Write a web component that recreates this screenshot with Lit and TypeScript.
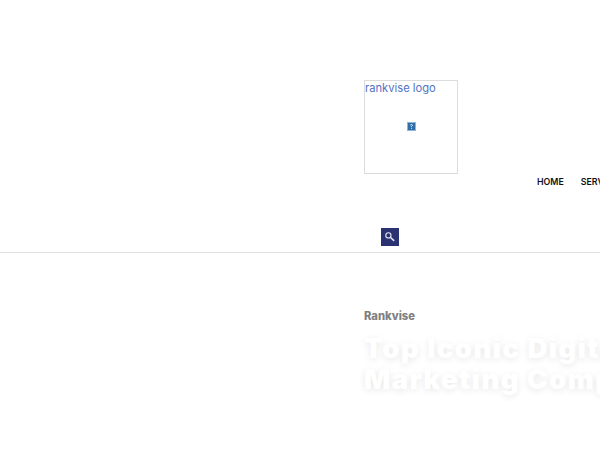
import { LitElement, html, css } from "lit";
import { customElement } from "lit/decorators.js";

@customElement("app-root")
export class AppRoot extends LitElement {
  static styles = css`
    :host {
      display: block;
      width: 600px;
      height: 450px;
      overflow: hidden;
      background: #fff;
      font-family: Inter, "Liberation Sans", sans-serif;
    }
    .header {
      height: 252px;
      border-bottom: 1px solid #e2e2e2;
      display: flex;
      flex-direction: column;
      padding-left: 364px;
      overflow: hidden;
    }
    .top {
      display: flex;
      padding-top: 80px;
      width: 400px;
    }
    .logo {
      width: 94px;
      height: 94px;
      box-sizing: border-box;
      border: 1px solid #dcdcdc;
      position: relative;
      color: #5273c4;
      font-size: 11.2px;
      line-height: 14px;
    }
    .broken {
      position: absolute;
      left: 42px;
      top: 41px;
      width: 9px;
      height: 9px;
      display: block;
    }
    .nav {
      display: flex;
      gap: 17px;
      margin-left: 79px;
      margin-top: 95px;
      font-size: 8.8px;
      font-weight: 600;
      line-height: 14px;
      color: #111;
      white-space: nowrap;
    }
    .search {
      width: 18px;
      height: 18px;
      margin-left: 17px;
      margin-top: 39px;
      background: #2a3272;
      display: flex;
      align-items: center;
      justify-content: center;
    }
    .hero {
      padding: 55px 0 0 364px;
      width: 400px;
    }
    .sub {
      font-size: 11.2px;
      font-weight: 800;
      color: #808080;
      line-height: 16px;
    }
    .title {
      margin: 9px 0 0;
      font-size: 27.5px;
      font-weight: 900;
      line-height: 31px;
      letter-spacing: 1.5px;
      color: #fff;
      text-shadow: 0 2px 7px rgba(0, 0, 0, 0.09);
      white-space: nowrap;
    }
  `;

  render() {
    return html`
      <div class="header">
        <div class="top">
          <div class="logo">
            rankvise logo
            <svg class="broken" viewBox="0 0 9 9">
              <rect width="9" height="9" fill="#8fb4d4"></rect>
              <rect x="1" y="1" width="7" height="7" fill="#2f6ea8"></rect>
              <path d="M3.4 3.4 Q3.6 2.4 4.6 2.5 Q5.6 2.7 5.4 3.6 Q5 4.2 4.5 4.6 V5.2 M4.5 6 V6.8" fill="none" stroke="#fff" stroke-width="0.9"></path>
            </svg>
          </div>
          <nav class="nav"><span>HOME</span><span>SERVICES</span></nav>
        </div>
        <div class="search">
          <svg width="10" height="10" viewBox="0 0 10 10">
            <circle cx="3.4" cy="3.4" r="2.6" fill="none" stroke="#e8e8f4" stroke-width="1.1"></circle>
            <path d="M5.3 5.3 L9.2 8.9" stroke="#e8e8f4" stroke-width="1.5"></path>
          </svg>
        </div>
      </div>
      <section class="hero">
        <div class="sub">Rankvise</div>
        <h1 class="title">Top Iconic Digital<br />Marketing Company</h1>
      </section>
    `;
  }
}
